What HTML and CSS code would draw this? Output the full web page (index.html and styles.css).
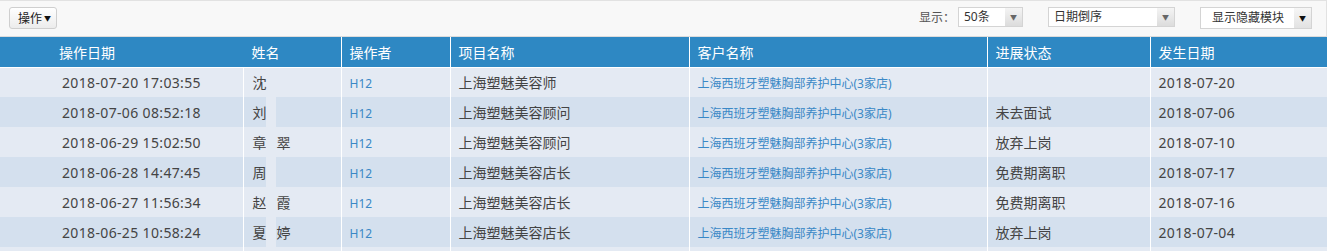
FILE: index.html
```html
<!DOCTYPE html>
<html lang="zh-CN">
<head>
<meta charset="utf-8">
<title>操作记录</title>
<link rel="stylesheet" href="styles.css">
</head>
<body>
<div class="page">
  <div class="toolbar">
    <button class="btn-op">操作<span class="caret">▼</span></button>
    <div class="tools-right">
      <span class="label">显示：</span>
      <div class="select sel-count"><span class="sel-text">50条</span><span class="sel-arrow">▼</span></div>
      <div class="select sel-order"><span class="sel-text">日期倒序</span><span class="sel-arrow">▼</span></div>
      <div class="select sel-module"><span class="sel-text">显示隐藏模块</span><span class="sel-arrow dark">▼</span></div>
    </div>
  </div>
  <div class="grid-wrap">
    <table class="grid">
      <colgroup>
        <col class="c1"><col class="c2"><col class="c3"><col class="c4"><col class="c5"><col class="c6"><col class="c7">
      </colgroup>
      <thead>
        <tr>
          <th class="first">操作日期</th><th class="nameh">姓名</th><th>操作者</th><th>项目名称</th><th>客户名称</th><th>进展状态</th><th>发生日期</th>
        </tr>
      </thead>
      <tbody>
        <tr>
          <td class="first">2018-07-20 17:03:55</td><td class="name">沈</td><td><a class="link lat">H12</a></td><td>上海塑魅美容师</td><td><a class="link">上海西班牙塑魅胸部养护中心(3家店)</a></td><td></td><td class="lat">2018-07-20</td>
        </tr>
        <tr>
          <td class="first">2018-07-06 08:52:18</td><td class="name">刘</td><td><a class="link lat">H12</a></td><td>上海塑魅美容顾问</td><td><a class="link">上海西班牙塑魅胸部养护中心(3家店)</a></td><td>未去面试</td><td class="lat">2018-07-06</td>
        </tr>
        <tr>
          <td class="first">2018-06-29 15:02:50</td><td class="name">章<span class="gap"></span>翠</td><td><a class="link lat">H12</a></td><td>上海塑魅美容顾问</td><td><a class="link">上海西班牙塑魅胸部养护中心(3家店)</a></td><td>放弃上岗</td><td class="lat">2018-07-10</td>
        </tr>
        <tr>
          <td class="first">2018-06-28 14:47:45</td><td class="name">周</td><td><a class="link lat">H12</a></td><td>上海塑魅美容店长</td><td><a class="link">上海西班牙塑魅胸部养护中心(3家店)</a></td><td>免费期离职</td><td class="lat">2018-07-17</td>
        </tr>
        <tr>
          <td class="first">2018-06-27 11:56:34</td><td class="name">赵<span class="gap"></span>霞</td><td><a class="link lat">H12</a></td><td>上海塑魅美容店长</td><td><a class="link">上海西班牙塑魅胸部养护中心(3家店)</a></td><td>免费期离职</td><td class="lat">2018-07-16</td>
        </tr>
        <tr>
          <td class="first">2018-06-25 10:58:24</td><td class="name">夏<span class="gap"></span>婷</td><td><a class="link lat">H12</a></td><td>上海塑魅美容店长</td><td><a class="link">上海西班牙塑魅胸部养护中心(3家店)</a></td><td>放弃上岗</td><td class="lat">2018-07-04</td>
        </tr>
        <tr>
          <td class="first">&nbsp;</td><td></td><td></td><td></td><td></td><td></td><td></td>
        </tr>
      </tbody>
    </table>
    <div class="mask"></div>
  </div>
</div>
</body>
</html>
```
FILE: styles.css
```css
* { box-sizing: border-box; }
html, body { margin: 0; padding: 0; background: #fff; }
body {
  font-family: "Noto Sans", "Noto Sans CJK SC", sans-serif;
  color: #444;
  overflow: hidden;
}
.page { width: 1327px; }

.toolbar {
  height: 37px;
  background: #f8f8f8;
  border-top: 1px solid #e2e2e2;
  border-right: 1px solid #e2e2e2;
  border-bottom: 1px solid #dcdcdc;
  display: flex;
  align-items: flex-start;
  justify-content: space-between;
  padding: 6px 14px 0 9px;
}
.btn-op {
  height: 22px;
  width: 48px;
  padding: 0 0 0 8px;
  border: 1px solid #cfcfcf;
  border-radius: 3px;
  background: linear-gradient(#ffffff, #ececec);
  font-family: "Noto Sans CJK SC", sans-serif;
  font-size: 12px;
  color: #222;
  display: flex;
  align-items: center;
  line-height: 1;
}
.caret { font-size: 7px; margin-left: 2px; color: #111; }

.tools-right { display: flex; align-items: flex-start; }
.label {
  font-family: "Noto Sans CJK SC", sans-serif;
  font-size: 12px;
  color: #555;
  line-height: 20px;
  margin-right: 3px;
}
.select {
  height: 20px;
  border: 1px solid #d4d4d4;
  background: #fff;
  display: flex;
  align-items: stretch;
  font-family: "Noto Sans", "Noto Sans CJK SC", sans-serif;
  font-size: 12px;
  color: #333;
}
.sel-text { flex: 1; padding-left: 5px; line-height: 18px; }
.sel-arrow {
  width: 17px;
  background: linear-gradient(#f4f4f4, #dcdcdc);
  color: #666;
  font-size: 7px;
  display: flex;
  align-items: center;
  justify-content: center;
}
.sel-arrow.dark { color: #111; background: linear-gradient(#f6f6f6, #e2e2e2); }
.sel-count { width: 65px; }
.sel-order { width: 127px; margin-left: 25px; }
.sel-module { width: 112px; height: 22px; margin-left: 25px; }
.sel-module .sel-text { padding-left: 11px; line-height: 20px; }

.grid-wrap { position: relative; }
.grid {
  width: 1327px;
  table-layout: fixed;
  border-collapse: collapse;
  border-spacing: 0;
}
.c1 { width: 243px; }
.c2 { width: 98px; }
.c3 { width: 109px; }
.c4 { width: 239px; }
.c5 { width: 298px; }
.c6 { width: 163px; }
.c7 { width: 177px; }

.grid th {
  background: #2e88c3;
  color: #fff;
  font-family: "Noto Sans CJK SC", sans-serif;
  font-weight: normal;
  font-size: 14px;
  text-align: left;
  height: 30px;
  padding: 0 0 0 8px;
  border-left: 1px solid #fff;
  border-bottom: 1px solid #fff;
}
.grid th.first { border-left: none; padding-left: 59px; }
.grid th.nameh { border-left: 1px solid #2e88c3; }
.grid td {
  height: 30px;
  padding: 0 0 0 8px;
  font-size: 14px;
  border-left: 1px solid #fff;
  white-space: nowrap;
  overflow: hidden;
  color: #444;
}
.grid td.first { border-left: none; padding-left: 62px; letter-spacing: 0.35px; }
.grid td.lat { letter-spacing: 0.35px; }
.grid tbody tr:nth-child(odd) td { background: #e4eaf3; }
.grid tbody tr:nth-child(even) td { background: #d4e0ee; }
.grid td.name { padding-left: 9px; }
.gap { display: inline-block; width: 10px; }
.link {
  color: #3a88c6;
  font-size: 12px;
  text-decoration: none;
}
.link.lat { letter-spacing: 0; }

.mask {
  position: absolute;
  left: 266px;
  top: 58px;
  width: 10px;
  bottom: 0;
  background: #e4eaf3;
}
```
